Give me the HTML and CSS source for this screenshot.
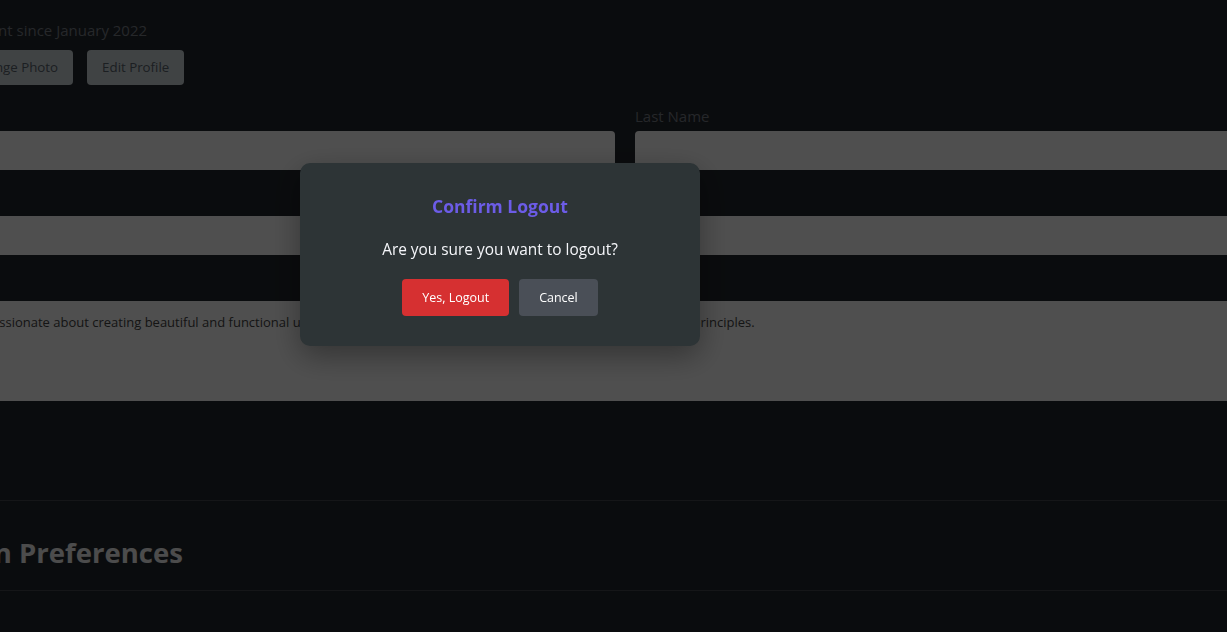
FILE: index.html
```html
<!DOCTYPE html>
<html lang="en">
<head>
<meta charset="utf-8">
<title>Account Settings</title>
<link rel="stylesheet" href="styles.css">
</head>
<body>
<main class="content">
  <section class="profile">
    <div class="avatar"></div>
    <div class="profile-info">
      <p class="since">Account since January 2022</p>
      <div class="actions">
        <button class="btn-light" type="button">Change Photo</button>
        <button class="btn-light" type="button">Edit Profile</button>
      </div>
    </div>
  </section>

  <form class="form">
    <div class="row two">
      <div class="group">
        <label>First Name</label>
        <input type="text">
      </div>
      <div class="group">
        <label>Last Name</label>
        <input type="text">
      </div>
    </div>
    <div class="group">
      <label>Email Address</label>
      <input type="email">
    </div>
    <div class="group">
      <label>Bio</label>
      <textarea>Creative UI/UX designer passionate about creating beautiful and functional user interfaces. Always learning and exploring new design and UX principles.</textarea>
    </div>
  </form>

  <section class="section-head">
    <h2>Notification Preferences</h2>
  </section>
</main>

<div class="overlay">
  <div class="modal" role="dialog">
    <h3 class="modal-title">Confirm Logout</h3>
    <p class="modal-text">Are you sure you want to logout?</p>
    <div class="modal-actions">
      <button class="btn btn-danger" type="button">Yes, Logout</button>
      <button class="btn btn-cancel" type="button">Cancel</button>
    </div>
  </div>
</div>
</body>
</html>
```

FILE: styles.css
```css
* { box-sizing: border-box; }

html, body {
  margin: 0;
  height: 100%;
  overflow: hidden;
}

body {
  background: #23272d;
  font-family: "Open Sans", "Noto Sans", sans-serif;
  color: #f2f2f2;
}

.content {
  width: 1600px;
  margin-left: -175px;
  padding-top: 20px;
}

.profile {
  display: flex;
  gap: 31px;
}

.avatar {
  width: 100px;
  height: 100px;
  border-radius: 50%;
  background: #3d4450;
  flex: none;
  margin-top: -40px;
}

.since {
  margin: 0;
  font-size: 15px;
  line-height: 20px;
  color: #7a8089;
}

.actions {
  display: flex;
  gap: 14px;
  margin-top: 10px;
}

.btn-light {
  font-family: inherit;
  font-size: 13.3px;
  line-height: 19px;
  height: 35px;
  padding: 8px 15px;
  border: none;
  border-radius: 4px;
  background: #ced8db;
  color: #5a646e;
}

.form {
  margin-top: 20px;
  padding-bottom: 79px;
  border-bottom: 1px solid #45484f;
}

.row.two {
  display: grid;
  grid-template-columns: 1fr 1fr;
  gap: 20px;
}

.group {
  display: flex;
  flex-direction: column;
  margin-bottom: 20px;
}

.group label {
  font-size: 15px;
  line-height: 22px;
  margin-bottom: 4px;
  color: #787e87;
}

.group input,
.group textarea {
  font-family: inherit;
  border: none;
  border-radius: 4px;
  background: #ffffff;
  color: #444444;
}

.group input {
  height: 39px;
  padding: 0 12px;
}

.group textarea {
  height: 100px;
  padding: 12px;
  font-size: 13px;
  line-height: 18px;
  resize: none;
}

.section-head {
  padding: 35px 0 20px;
  border-bottom: 1px solid #45484f;
}

.section-head h2 {
  margin: 0 0 0 22px;
  font-size: 27.5px;
  line-height: 34px;
  font-weight: 700;
  color: #f4f4f4;
}

.overlay {
  position: fixed;
  inset: 0;
  background: rgba(0, 0, 0, 0.69);
}

.modal {
  width: 400px;
  margin: 163px 0 0 300px;
  padding: 30px;
  background: #2d3436;
  border-radius: 10px;
  box-shadow: 0 10px 30px rgba(0, 0, 0, 0.35);
  text-align: center;
}

.modal-title {
  margin: 0 0 20px;
  font-size: 17.5px;
  line-height: 26px;
  font-weight: 700;
  color: #6c5ce7;
}

.modal-text {
  margin: 0 0 18px;
  font-size: 15.4px;
  line-height: 22px;
  color: #f5f6fa;
}

.modal-actions {
  display: flex;
  justify-content: center;
  gap: 10px;
}

.btn {
  font-family: inherit;
  font-size: 12.5px;
  line-height: 17px;
  padding: 10px 20px;
  border: none;
  border-radius: 4px;
  color: #ffffff;
}

.btn-danger { background: #d63031; }
.btn-cancel { background: #4a4f57; }
```
